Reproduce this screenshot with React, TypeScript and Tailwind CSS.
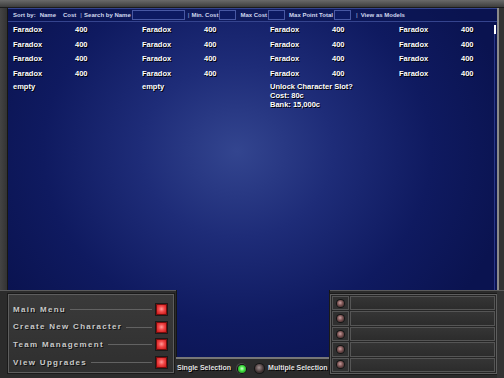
import React from 'react';

const blue =
  'bg-fixed bg-[radial-gradient(ellipse_55%_65%_at_47%_40%,#33458f_0%,#1e2c78_35%,#0f1a60_70%,#0a1350_100%)]';

const rows = [0, 1, 2, 3];
const menu = ['Main Menu', 'Create New Character', 'Team Management', 'View Upgrades'];

const Cell: React.FC<{ name: string; price: string }> = ({ name, price }) => (
  <div className="flex">
    <span className="w-[62px]">{name}</span>
    <span>{price}</span>
  </div>
);

const Input: React.FC<{ w: string }> = ({ w }) => (
  <span className={`${w} h-[10px] border border-[#4858a4] bg-[#0d1a62]`} />
);

const RedButton = () => (
  <span className="w-[11px] h-[11px] border border-[#7a0c0c] bg-[radial-gradient(circle_at_50%_45%,#ff9a9a_0%,#f04444_45%,#c41818_100%)] shadow-[0_0_0_1px_#1a1a1a]" />
);

export default function App() {
  return (
    <div className="w-[504px] h-[378px] bg-[#2b2b2b] flex flex-col overflow-hidden font-['Liberation_Sans',Arial,sans-serif] font-bold">
      {/* top frame strip */}
      <div className="h-[8px] shrink-0 bg-[linear-gradient(#6a6a6a,#3c3c3c)] border-b border-[#1c1c1c]" />

      {/* main blue screen */}
      <div className="flex h-[282px] shrink-0">
        <div className="w-[8px] bg-[linear-gradient(90deg,#444,#333)] border-r border-[#151515]" />
        <div className={`${blue} flex-1 flex flex-col`}>
          <div className="h-[14px] flex items-center text-[6px] text-[#d0d7ee] border-y border-[#35448e] bg-[#0a1450]/50 pl-[5px]">
            <span>Sort by:</span>
            <span className="ml-[4px]">Name</span>
            <span className="ml-[7px]">Cost</span>
            <span className="ml-[4px] text-[#7b88c0]">|</span>
            <span className="ml-[2px]">Search by Name</span>
            <span className="ml-[1px] flex"><Input w="w-[53px]" /></span>
            <span className="ml-[3px] text-[#7b88c0]">|</span>
            <span className="ml-[2px]">Min. Cost</span>
            <span className="ml-[1px] flex"><Input w="w-[17px]" /></span>
            <span className="ml-[4px]">Max Cost</span>
            <span className="ml-[1px] flex"><Input w="w-[17px]" /></span>
            <span className="ml-[4px]">Max Point Total</span>
            <span className="ml-[1px] flex"><Input w="w-[17px]" /></span>
            <span className="ml-[5px] text-[#7b88c0]">|</span>
            <span className="ml-[3px]">View as Models</span>
          </div>
          <div className="flex flex-1">
            <div className="flex-1 pl-[5px] text-[7.5px] text-white [text-shadow:1px_1px_0_#000]">
              {rows.map((r) => (
                <div key={r} className="grid grid-cols-[129px_128px_129px_1fr] h-[14.8px] items-center">
                  <Cell name="Faradox" price="400" />
                  <Cell name="Faradox" price="400" />
                  <Cell name="Faradox" price="400" />
                  <Cell name="Faradox" price="400" />
                </div>
              ))}
              <div className="grid grid-cols-[129px_128px_129px_1fr] pt-[2px] leading-[8.7px]">
                <span>empty</span>
                <span>empty</span>
                <div className="flex flex-col">
                  <span>Unlock Character Slot?</span>
                  <span>Cost: 80c</span>
                  <span>Bank: 15,000c</span>
                </div>
                <span />
              </div>
            </div>
            <div className="w-[5px] flex justify-center pt-[3px]">
              <div className="w-[1px] bg-[#2a3888] flex flex-col">
                <div className="w-[2px] -ml-[0.5px] h-[9px] bg-white" />
              </div>
            </div>
          </div>
        </div>
        <div className="w-[7px] bg-[#333] border-l-2 border-[#8a8a8a]" />
      </div>

      {/* bottom section */}
      <div className="flex flex-1">
        {/* left menu */}
        <div className="w-[176px] pl-[8px] pt-[3px] pr-[2px] border-t border-[#5a5a5a]">
          <div className="h-[79px] border border-[#5e5e5e] bg-[linear-gradient(#3a3a3a,#2f2f2f)] shadow-[0_0_0_1px_#1a1a1a] pt-[6px] pl-[4px] pr-[6px] flex flex-col">
            {menu.map((m) => (
              <div key={m} className="h-[17.6px] flex items-center">
                <span className="text-[8px] tracking-[1.3px] text-[#c9c9c9] [text-shadow:1px_1px_0_#111]">{m}</span>
                <span className="flex-1 h-px bg-[#626262] mx-[4px]" />
                <RedButton />
              </div>
            ))}
          </div>
        </div>

        {/* center */}
        <div className="w-[154px] flex flex-col">
          <div className={`${blue} h-[67px] border-x border-[#151515]`} />
          <div className="flex-1 border-t-2 border-[#777] flex items-center text-[7px] text-[#e2e2e2] [text-shadow:1px_1px_0_#000] px-[1px]">
            <span>Single Selection</span>
            <span className="w-[11px] h-[11px] rounded-full bg-[#4a4a4a] flex items-center justify-center ml-[5px]">
              <span className="w-[8px] h-[8px] rounded-full bg-[radial-gradient(circle_at_50%_45%,#d8ffd8_0%,#44e644_40%,#0f6a0f_100%)] shadow-[0_0_0_1px_#101010]" />
            </span>
            <span className="w-[9px] h-[9px] rounded-full bg-[radial-gradient(circle_at_45%_40%,#a09090_0%,#4a3a3a_55%,#1e1818_100%)] shadow-[0_0_0_1px_#151515] ml-[8px]" />
            <span className="ml-[4px]">Multiple Selection</span>
          </div>
        </div>

        {/* right panel */}
        <div className="flex-1 flex border-t border-[#5a5a5a]">
          <div className="w-[167px] mt-[3px] h-[80px] border border-[#5e5e5e] bg-[#262626] p-[1px] flex flex-col gap-[1px] shadow-[0_0_0_1px_#1a1a1a]">
            {[0, 1, 2, 3, 4].map((i) => (
              <div key={i} className="flex-1 flex gap-[1px]">
                <div className="w-[17px] border border-[#555] bg-[#303030] flex items-center justify-center">
                  <span className="w-[7px] h-[7px] rounded-full bg-[radial-gradient(circle_at_45%_40%,#c9a0a0_0%,#7a5252_45%,#2a1c1c_100%)] shadow-[0_0_0_1px_#151515]" />
                </div>
                <div className="flex-1 border border-[#555] bg-[linear-gradient(#353535,#2c2c2c)]" />
              </div>
            ))}
          </div>
          <div className="flex-1 bg-[#333]" />
        </div>
      </div>
    </div>
  );
}
